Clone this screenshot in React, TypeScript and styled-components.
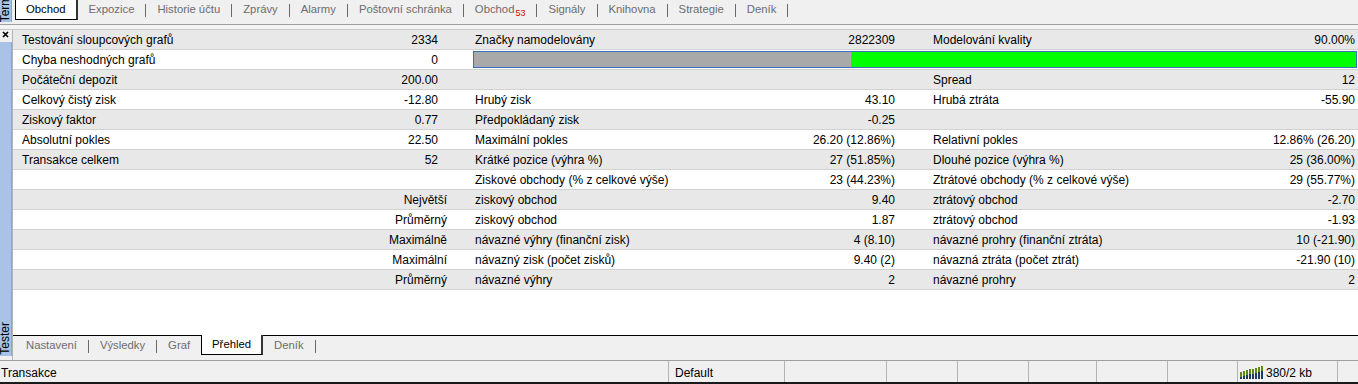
import { Fragment } from "react";
import styled, { createGlobalStyle } from "styled-components";

const GlobalStyle = createGlobalStyle`
  html, body {
    margin: 0;
    padding: 0;
    background: #ffffff;
  }
  body {
    font-family: "Liberation Sans", Arial, sans-serif;
    font-size: 12px;
    color: #000;
  }
`;

type Cell = { label?: string; value?: string; right?: boolean };
type Row = { cells: Cell[]; bar?: number };

const rows: Row[] = [
  {
    cells: [
      { label: "Testování sloupcových grafů", value: "2334" },
      { label: "Značky namodelovány", value: "2822309" },
      { label: "Modelování kvality", value: "90.00%" },
    ],
  },
  { cells: [{ label: "Chyba neshodných grafů", value: "0" }], bar: 42.8 },
  {
    cells: [
      { label: "Počáteční depozit", value: "200.00" },
      {},
      { label: "Spread", value: "12" },
    ],
  },
  {
    cells: [
      { label: "Celkový čistý zisk", value: "-12.80" },
      { label: "Hrubý zisk", value: "43.10" },
      { label: "Hrubá ztráta", value: "-55.90" },
    ],
  },
  {
    cells: [
      { label: "Ziskový faktor", value: "0.77" },
      { label: "Předpokládaný zisk", value: "-0.25" },
      {},
    ],
  },
  {
    cells: [
      { label: "Absolutní pokles", value: "22.50" },
      { label: "Maximální pokles", value: "26.20 (12.86%)" },
      { label: "Relativní pokles", value: "12.86% (26.20)" },
    ],
  },
  {
    cells: [
      { label: "Transakce celkem", value: "52" },
      { label: "Krátké pozice (výhra %)", value: "27 (51.85%)" },
      { label: "Dlouhé pozice (výhra %)", value: "25 (36.00%)" },
    ],
  },
  {
    cells: [
      {},
      { label: "Ziskové obchody (% z celkové výše)", value: "23 (44.23%)" },
      { label: "Ztrátové obchody (% z celkové výše)", value: "29 (55.77%)" },
    ],
  },
  {
    cells: [
      { label: "Největší", right: true },
      { label: "ziskový obchod", value: "9.40" },
      { label: "ztrátový obchod", value: "-2.70" },
    ],
  },
  {
    cells: [
      { label: "Průměrný", right: true },
      { label: "ziskový obchod", value: "1.87" },
      { label: "ztrátový obchod", value: "-1.93" },
    ],
  },
  {
    cells: [
      { label: "Maximálně", right: true },
      { label: "návazné výhry (finanční zisk)", value: "4 (8.10)" },
      { label: "návazné prohry (finanční ztráta)", value: "10 (-21.90)" },
    ],
  },
  {
    cells: [
      { label: "Maximální", right: true },
      { label: "návazný zisk (počet zisků)", value: "9.40 (2)" },
      { label: "návazná ztráta (počet ztrát)", value: "-21.90 (10)" },
    ],
  },
  {
    cells: [
      { label: "Průměrný", right: true },
      { label: "návazné výhry", value: "2" },
      { label: "návazné prohry", value: "2" },
    ],
  },
];

const topTabs = [
  { name: "Obchod", active: true },
  { name: "Expozice" },
  { name: "Historie účtu" },
  { name: "Zprávy" },
  { name: "Alarmy" },
  { name: "Poštovní schránka" },
  { name: "Obchod", badge: "53" },
  { name: "Signály" },
  { name: "Knihovna" },
  { name: "Strategie" },
  { name: "Deník" },
];

const bottomTabs = [
  { name: "Nastavení" },
  { name: "Výsledky" },
  { name: "Graf" },
  { name: "Přehled", active: true },
  { name: "Deník" },
];

const statusCells = [
  { w: 669, text: "Transakce", pad: 1 },
  { w: 116, text: "Default", pad: 6 },
  { w: 102 },
  { w: 71 },
  { w: 71 },
  { w: 68 },
  { w: 71 },
  { w: 70 },
  { w: 100, meter: true },
  { w: 20 },
];

// layout
const Window = styled.div`
  width: 1358px;
  height: 384px;
  display: flex;
  flex-direction: column;
  overflow: hidden;
  background: #f0f0f0;
`;

const TopBar = styled.div`
  height: 24px;
  display: flex;
`;

const SideLabel = styled.div`
  width: 11px;
  height: 22px;
  background: #a9c3e6;
  border-right: 1px solid #8aa6cf;
  display: flex;
  flex-direction: column;
  justify-content: flex-end;
  align-items: center;
  overflow: hidden;
  flex-shrink: 0;
`;

const VerticalText = styled.span`
  writing-mode: vertical-rl;
  transform: rotate(180deg);
  font-size: 12px;
  line-height: 11px;
  white-space: nowrap;
  color: #000;
`;

const TabStrip = styled.div<{ $bottom?: boolean }>`
  display: flex;
  align-items: flex-start;
  padding-left: ${(p) => (p.$bottom ? 2 : 3)}px;
  height: ${(p) => (p.$bottom ? 21 : 24)}px;
  box-sizing: border-box;
  border-top: ${(p) => (p.$bottom ? "1px solid #000" : "none")};
  background: #f0f0f0;
`;

const Tab = styled.div<{ $active?: boolean; $bottom?: boolean }>`
  height: 20px;
  line-height: 19px;
  padding: 0 10px;
  box-sizing: border-box;
  white-space: nowrap;
  font-size: 11.3px;
  color: ${(p) => (p.$active ? "#000" : "#6d6d6d")};
  background: ${(p) => (p.$active ? "#fff" : "transparent")};
  border: 1px solid ${(p) => (p.$active ? "#000" : "transparent")};
  border-top: none;
  border-right: ${(p) => (p.$active ? "2px solid #333" : "1px solid transparent")};
  margin-top: ${(p) => (p.$bottom && p.$active ? -1 : 0)}px;
`;

const Badge = styled.sub`
  color: #e00000;
  font-size: 9px;
  vertical-align: -3px;
  margin-left: 1px;
`;

const Sep = styled.span`
  width: 1px;
  height: 13px;
  margin-top: 4px;
  background: #6a6a6a;
  flex-shrink: 0;
`;

const Divider = styled.div`
  height: 6px;
  border-top: 1px solid #a0a0a0;
  border-bottom: 1px solid #c8c8c8;
  box-sizing: border-box;
  background: #f4f4f4;
`;

const Body = styled.div`
  flex: 1;
  display: flex;
  min-height: 0;
`;

const SideColumn = styled.div`
  width: 12px;
  display: flex;
  flex-direction: column;
  padding-bottom: 4px;
  flex-shrink: 0;
`;

const CloseBox = styled.div`
  height: 12px;
  display: flex;
  align-items: flex-start;
  padding: 1px 0 0 2px;
  box-sizing: border-box;
`;

const SideStrip = styled.div`
  flex: 1;
  width: 11px;
  background: #a9c3e6;
  border-right: 1px solid #8aa6cf;
  display: flex;
  flex-direction: column;
  justify-content: flex-end;
  align-items: center;
  padding-bottom: 1px;
`;

const MainColumn = styled.div`
  flex: 1;
  display: flex;
  flex-direction: column;
  border-left: 1px solid #b4b4b4;
  padding-bottom: 4px;
`;

const Table = styled.div`
  display: flex;
  flex-direction: column;
  background: #fff;
`;

const TableRow = styled.div<{ $shaded: boolean }>`
  display: grid;
  grid-template-columns: 453px 458px 1fr;
  height: 20px;
  box-sizing: border-box;
  border-bottom: 1px solid #d2d2d2;
  background: ${(p) => (p.$shaded ? "#e8e8e8" : "#ffffff")};
`;

const Group = styled.div<{ $l: number; $r: number; $right?: boolean }>`
  display: flex;
  align-items: center;
  justify-content: ${(p) => (p.$right ? "flex-end" : "space-between")};
  padding: 1px ${(p) => p.$r}px 0 ${(p) => p.$l}px;
  white-space: nowrap;
  line-height: 18px;
`;

const BarCell = styled.div`
  grid-column: 2 / 4;
  padding: 1px 1px 1px 7px;
  display: flex;
`;

const Bar = styled.div`
  flex: 1;
  height: 17px;
  box-sizing: border-box;
  border: 1px solid #3a6fbf;
  background: #00ff00;
  display: flex;
`;

const BarFill = styled.div`
  height: 100%;
  background: #a9a9a9;
`;

const Filler = styled.div`
  flex: 1;
  background: #fff;
`;

const StatusBar = styled.div`
  height: 24px;
  display: flex;
  box-sizing: border-box;
  border-top: 1px solid #a0a0a0;
  border-bottom: 2px solid #1a1a1a;
  background: #f0f0f0;
`;

const StatusCell = styled.div<{ $w: number; $pad: number }>`
  width: ${(p) => p.$w}px;
  flex-shrink: 0;
  display: flex;
  align-items: center;
  gap: 3px;
  padding: 2px 0 0 ${(p) => p.$pad}px;
  box-sizing: border-box;
  border-right: 1px solid #b4b4b4;
  white-space: nowrap;
  &:last-child {
    border-right: none;
  }
`;

const groupPad = [
  { l: 9, r: 28 },
  { l: 9, r: 29 },
  { l: 9, r: 3 },
];

const CloseIcon = () => (
  <svg width="7" height="7" viewBox="0 0 7 7">
    <path d="M1 1 L6 6 M6 1 L1 6" stroke="#000" strokeWidth="1.7" />
  </svg>
);

const MeterIcon = () => {
  const bars = Array.from({ length: 8 }, (_, i) => i);
  return (
    <svg width="23" height="13" viewBox="0 0 23 13">
      {bars.map((i) => {
        const h = Math.round(7 + (i * 6) / 7);
        const x = i * 3;
        return (
          <g key={i}>
            <rect x={x} y={13 - h} width="2" height={h} fill="#1d3b63" />
            <rect x={x} y={13 - h} width="2" height={Math.min(5, h)} fill="#5d8a12" />
          </g>
        );
      })}
    </svg>
  );
};

const renderTabs = (
  tabs: { name: string; active?: boolean; badge?: string }[],
  bottom?: boolean
) =>
  tabs.map((t, i) => {
    const next = tabs[i + 1];
    return (
      <Fragment key={t.name + i}>
        <Tab $active={t.active} $bottom={bottom}>
          {t.name}
          {t.badge && <Badge>{t.badge}</Badge>}
        </Tab>
        {!t.active && !(next && next.active) && <Sep />}
      </Fragment>
    );
  });

export default function App() {
  return (
    <>
      <GlobalStyle />
      <Window>
        {/* terminal tabs */}
        <TopBar>
          <SideLabel>
            <VerticalText>Terminal</VerticalText>
          </SideLabel>
          <TabStrip>{renderTabs(topTabs)}</TabStrip>
        </TopBar>
        <Divider />
        <Body>
          <SideColumn>
            <CloseBox>
              <CloseIcon />
            </CloseBox>
            <SideStrip>
              <VerticalText>Tester</VerticalText>
            </SideStrip>
          </SideColumn>
          <MainColumn>
            {/* report */}
            <Table>
              {rows.map((row, ri) => (
                <TableRow key={ri} $shaded={ri % 2 === 0}>
                  {row.cells.map((c, ci) => (
                    <Group
                      key={ci}
                      $l={groupPad[ci].l}
                      $r={c.right ? 19 : groupPad[ci].r}
                      $right={c.right}
                    >
                      <span>{c.label}</span>
                      {c.value && <span>{c.value}</span>}
                    </Group>
                  ))}
                  {row.bar !== undefined && (
                    <BarCell>
                      <Bar>
                        <BarFill style={{ width: `${row.bar}%` }} />
                      </Bar>
                    </BarCell>
                  )}
                </TableRow>
              ))}
            </Table>
            <Filler />
            <TabStrip $bottom>{renderTabs(bottomTabs, true)}</TabStrip>
          </MainColumn>
        </Body>
        <StatusBar>
          {statusCells.map((c, i) => (
            <StatusCell key={i} $w={c.w} $pad={c.pad ?? 2}>
              {c.meter && <MeterIcon />}
              {c.meter ? "380/2 kb" : c.text}
            </StatusCell>
          ))}
        </StatusBar>
      </Window>
    </>
  );
}
